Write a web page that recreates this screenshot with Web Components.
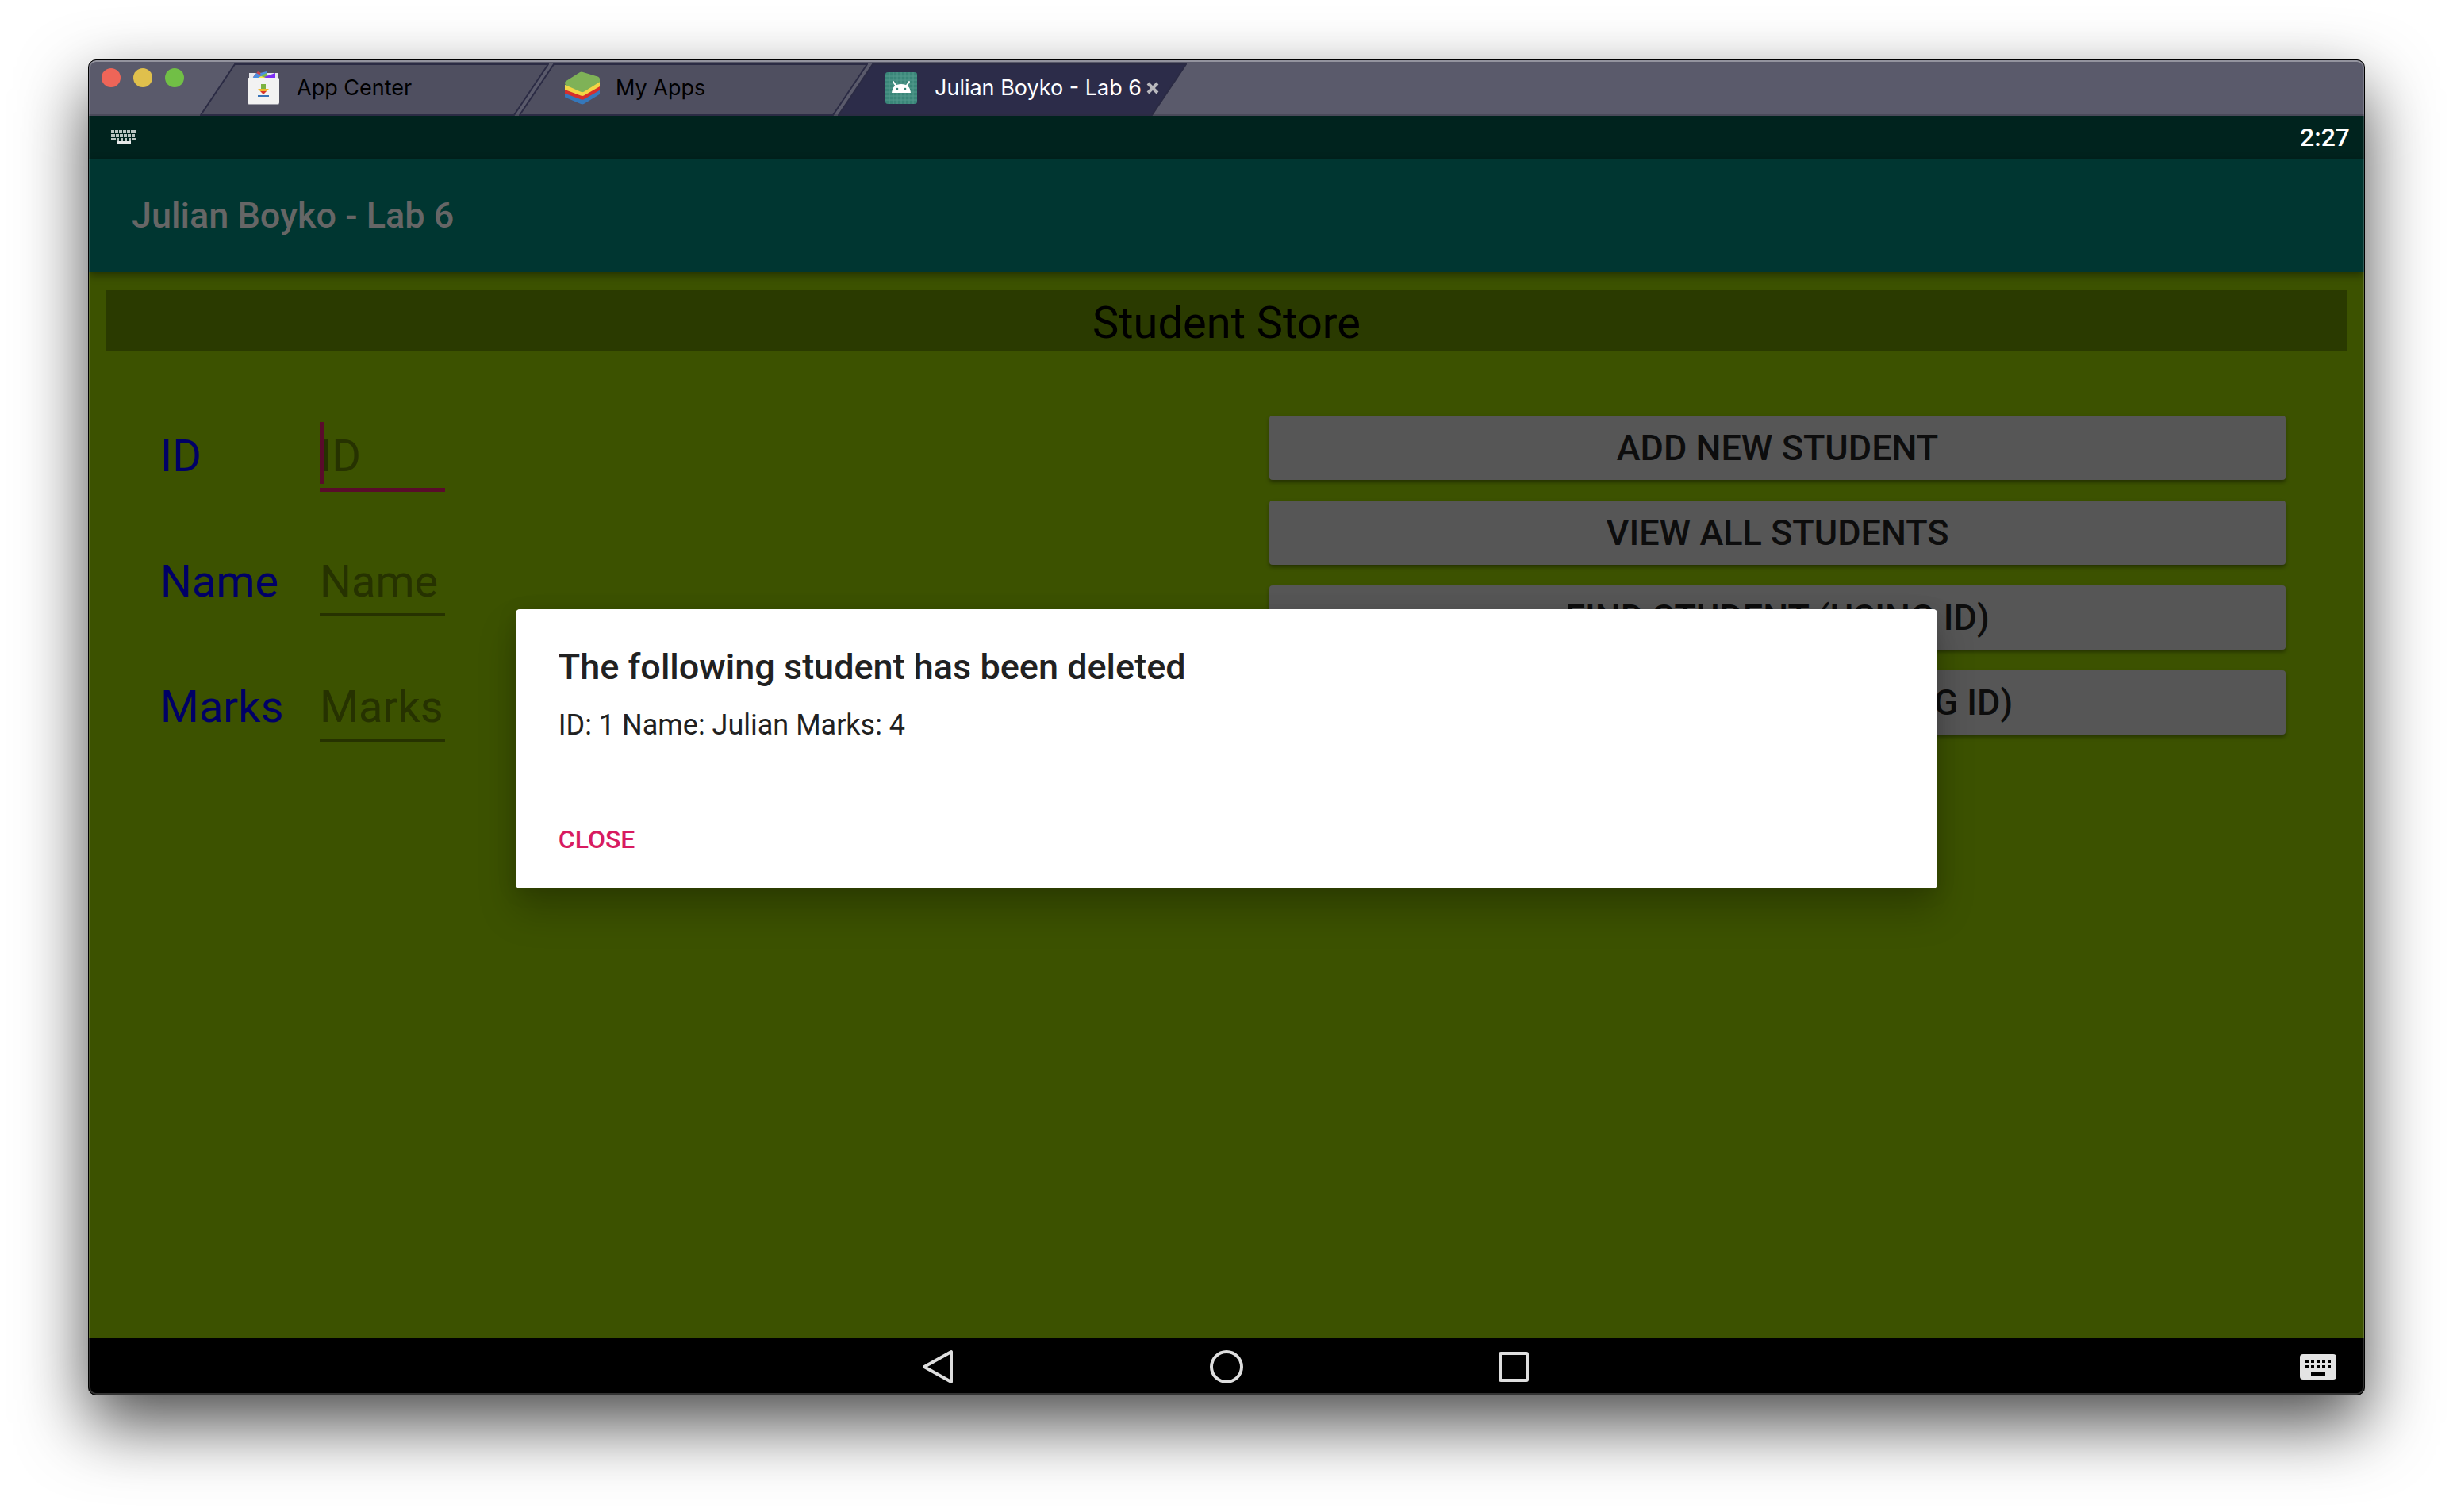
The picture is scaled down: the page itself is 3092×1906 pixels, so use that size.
<!DOCTYPE html>
<html lang="en">
<head>
<meta charset="utf-8">
<title>Julian Boyko - Lab 6</title>
<style>
  body { margin: 0; background: #fff; font-family: Roboto, "Noto Sans", sans-serif; }
</style>
</head>
<body>
<emulator-window>
  <window-tab slot="tabs" label="App Center">
    <svg slot="icon" width="42" height="44" viewBox="0 0 42 44" aria-hidden="true">
      <rect x="3" y="3" width="36" height="12" fill="#e8e8ec"/>
      <path d="M8 8 14 1l7 3-3 7z" fill="#c8434b"/>
      <path d="M7 10 12 3l7 4 2 5z" fill="#4c8fe0"/>
      <path d="M17 3 25 1l2 9-8 2z" fill="#4c8fe0"/>
      <path d="M19 6 25 3l3 7-8 2z" fill="#7cba4f"/>
      <path d="M22 8 36 3v9H24z" fill="#7c2cf5"/>
      <path d="M11 11l7-4 12 4v2H11z" fill="#fbe64b"/>
      <rect x="1" y="9" width="40" height="34" rx="2" fill="#9a9aa4"/>
      <rect x="1" y="9" width="40" height="33" rx="2" fill="#f2f2f2"/>
      <path d="M18 17h6v6h-6z" fill="#7cb342"/>
      <path d="M14 23h14l-3 3H17z" fill="#f0b92c"/>
      <path d="M17 26h8l-4 4z" fill="#d8352c"/>
      <path d="M14 31h14v2H14z" fill="#3874b8"/>
    </svg>
  </window-tab>
  <window-tab slot="tabs" label="My Apps">
    <svg slot="icon" width="46" height="44" viewBox="0 0 46 44" aria-hidden="true">
      <path d="M0 30 L23 16 46 24v6L25 43q-2 1-4 0L0 34z" fill="#3578bb"/>
      <path d="M0 24 L23 12 46 20v5L25 37q-2 1-4 0L0 29z" fill="#d62f2c"/>
      <path d="M0 18 L23 8 46 14v6L25 32q-2 1-4 0L0 24z" fill="#f3d645"/>
      <path d="M1 13 20 1q2-1 4 0l20 6q2 1 2 3v4L25 27q-2 1-4 0L1 18q-2-3 0-5z" fill="#7fb257"/>
    </svg>
  </window-tab>
  <window-tab slot="tabs" label="Julian Boyko - Lab 6" active>
    <svg slot="icon" width="40" height="40" viewBox="0 0 40 40" aria-hidden="true">
      <rect width="40" height="40" rx="3" fill="#3a8679"/>
      <path d="M5 0v40M10 0v40M15 0v40M20 0v40M25 0v40M30 0v40M35 0v40M0 5h40M0 10h40M0 15h40M0 20h40M0 25h40M0 30h40M0 35h40" stroke="#53998d" stroke-width="1"/>
      <path d="M10 12l4 6M30 12l-4 6" stroke="#fff" stroke-width="2" stroke-linecap="round"/>
      <path d="M8 26q1-11 12-11t12 11z" fill="#fff"/>
      <circle cx="15" cy="21" r="1.300" fill="#3a8679"/><circle cx="25" cy="21" r="1.300" fill="#3a8679"/>
    </svg>
  </window-tab>

  <status-bar time="2:27"></status-bar>
  <app-screen>
    <app-bar slot="bar">Julian Boyko - Lab 6</app-bar>
    <page-banner slot="banner">Student Store</page-banner>
    <text-field slot="fields" label="ID" focused></text-field>
    <text-field slot="fields" label="Name"></text-field>
    <text-field slot="fields" label="Marks"></text-field>
    <action-button slot="actions">ADD NEW STUDENT</action-button>
    <action-button slot="actions">VIEW ALL STUDENTS</action-button>
    <action-button slot="actions">FIND STUDENT (USING ID)</action-button>
    <action-button slot="actions">DELETE STUDENT (USING ID)</action-button>
    <alert-dialog slot="dialog" heading="The following student has been deleted" action="CLOSE">ID: 1 Name: Julian Marks: 4</alert-dialog>
  </app-screen>
  <nav-bar></nav-bar>
</emulator-window>

<script>
  const define = (name, css, render) => customElements.define(name, class extends HTMLElement {
    constructor() {
      super();
      this.attachShadow({ mode: 'open' });
    }
    connectedCallback() {
      this.shadowRoot.innerHTML = `<style>*{box-sizing:border-box}${css}</style>${render(this)}`;
    }
  });

  define('emulator-window', `
    :host { display: flex; box-sizing: border-box; min-height: 100vh; padding: 75px 111px 147px; }
    .frame { position: relative; flex: 1; display: flex; flex-direction: column; border: 1px solid #000;
      border-radius: 10px; overflow: hidden; background: #000; box-shadow: 0 36px 86px rgba(0,0,0,.7); }
    .frame::after { content: ""; position: absolute; inset: 0; border: 2px solid rgba(255,255,255,.2);
      border-top-color: rgba(255,255,255,.35); border-radius: 9px; pointer-events: none; }
    header { display: flex; height: 70px; background: #5a5a6b; box-shadow: inset 0 -2px #4a4a5a; }
    .lights { display: flex; gap: 16px; padding: 10px 20px 0 16px; width: 140px; }
    .lights button { width: 24px; height: 24px; padding: 0; border: 0; border-radius: 50%; }
    .close { background: #ee6558; } .min { background: #e0c04c; } .max { background: #71bf46; }
    nav { display: flex; padding-top: 4px; }
  `, () => `
    <div class="frame">
      <header>
        <div class="lights">
          <button class="close" aria-label="Close window"></button>
          <button class="min" aria-label="Minimize"></button>
          <button class="max" aria-label="Zoom"></button>
        </div>
        <nav><slot name="tabs"></slot></nav>
      </header>
      <slot></slot>
    </div>`);

  define('window-tab', `
    :host { display: grid; width: 440px; height: 66px; margin-right: -38px; color: #000;
      font-family: Inter, "Liberation Sans", sans-serif; font-size: 27px; line-height: 32px; }
    :host([active]) { color: #fff; }
    .shape, .row { grid-area: 1 / 1; }
    .shape { width: 100%; height: 100%; }
    polygon { fill: #4f4f60; stroke: #2b2b44; stroke-width: 2; }
    :host([active]) polygon { fill: #2c2c49; }
    .row { display: flex; align-items: center; padding: 0 0 4px 58px; }
    .icon { display: flex; width: 44px; justify-content: center; margin-right: 20px; }
    a { color: inherit; text-decoration: none; white-space: nowrap; }
    .x { display: flex; padding: 0; margin-left: 6px; border: 0; background: none; }
  `, el => `
    <svg class="shape" viewBox="0 0 440 66" preserveAspectRatio="none" aria-hidden="true"><polygon points="1,65 44,1 439,1 396,65"/></svg>
    <div class="row">
      <span class="icon"><slot name="icon"></slot></span>
      <a href="#">${el.getAttribute('label')}</a>
      ${el.hasAttribute('active') ? '<button class="x" aria-label="Close tab"><svg width="16" height="16" viewBox="0 0 16 16"><path d="M2 2l12 12M14 2L2 14" stroke="#b9b9bd" stroke-width="4"/></svg></button>' : ''}
    </div>`);

  const keys = (y, n, w, x0, step) => Array.from({ length: n }, (_, i) =>
    `<rect x="${x0 + i * step}" y="${y}" width="${w}" height="4"/>`).join('');

  define('status-bar', `
    :host { display: flex; box-sizing: border-box; height: 54px; align-items: center; justify-content: space-between; padding: 0 18px 0 28px;
      background: #00231e; color: #fff; font-size: 32px; font-weight: 500; line-height: 38px; }
  `, el => `
    <svg width="32" height="20" viewBox="0 0 32 20" fill="#b9c4c1" aria-label="Keyboard">
      ${keys(1, 6, 4, 0, 5)}<rect x="27" y="1" width="5" height="4"/>
      <rect y="6" width="5" height="4"/>${keys(6, 5, 4, 6, 5)}
      <rect y="11" width="6" height="3"/>${keys(11, 4, 3, 7, 5)}<rect x="26" y="11" width="6" height="3"/>
      <rect x="7" y="15" width="18" height="4" fill="#e6eae9"/>
    </svg>
    <time>${el.getAttribute('time')}</time>`);

  define('app-screen', `
    :host { position: relative; flex: 1; display: flex; flex-direction: column; background: #3c5200; }
    .form { display: grid; grid-template-columns: 1fr 1fr; }
    .fields { padding: 99px 0 0 90px; }
    .actions { display: flex; flex-direction: column; gap: 26px; padding: 81px 99px 0 54px; }
  `, () => `
    <slot name="bar"></slot>
    <slot name="banner"></slot>
    <div class="form">
      <div class="fields"><slot name="fields"></slot></div>
      <div class="actions"><slot name="actions"></slot></div>
    </div>
    <slot name="dialog"></slot>`);

  define('app-bar', `
    :host { display: flex; height: 143px; align-items: center; padding-left: 54px; background: #003631; box-shadow: 0 4px 10px rgba(0,0,0,.4); }
    h1 { margin: 0; color: #666; font-size: 45px; font-weight: 500; line-height: 54px; }
  `, () => `<h1><slot></slot></h1>`);

  define('page-banner', `
    :host { display: block; margin: 22px 22px 0; background: #2a3a00; }
    h2 { margin: 0; padding: 9px 0 3px; color: #000; text-align: center; font-size: 56px; font-weight: 400; line-height: 66px; }
  `, () => `<h2><slot></slot></h2>`);

  define('text-field', `
    :host { display: flex; align-items: flex-start; height: 158px; font-size: 56px; line-height: 66px; }
    label { width: 201px; color: #000066; }
    .box { position: relative; display: flex; }
    input { width: 158px; padding: 0 0 7px; border: 0; border-bottom: 4px solid #263200; border-radius: 0; background: none;
      font: inherit; height: 77px; outline: 0; color: #000; }
    input::placeholder { color: #263200; opacity: 1; }
    :host([focused]) input { height: 78px; border-bottom: 5px solid #5a0b2b; }
    :host([focused]) .box::after { content: ""; position: absolute; left: 0; top: -10px; width: 5px; height: 78px; background: #5a0b2b; }
  `, el => {
    const label = el.getAttribute('label');
    return `<label for="f">${label}</label><div class="box"><input id="f" type="text" placeholder="${label}"></div>`;
  });

  define('action-button', `
    :host { display: flex; }
    button { flex: 1; height: 81px; padding: 0; border: 0; border-radius: 4px; background: #565656; color: #0d0d0d;
      font: 500 45px/54px Roboto, sans-serif; box-shadow: 0 3px 5px rgba(0,0,0,.4); }
  `, () => `<button type="button"><slot></slot></button>`);

  define('alert-dialog', `
    :host { position: absolute; inset: 0; display: flex; align-items: center; justify-content: center; }
    dialog { position: static; width: 62.5%; margin: 0; padding: 46px 54px 43px; border: 0; border-radius: 5px;
      background: #fff; color: #212121; box-shadow: 0 28px 48px rgba(0,0,0,.22), 0 4px 24px rgba(0,0,0,.12); }
    h3 { margin: 0 0 26px; font-size: 45px; font-weight: 500; line-height: 53px; }
    p { margin: 0 0 104px; font-size: 36px; line-height: 42px; }
    button { display: block; padding: 0; border: 0; background: none; color: #d81b60; font: 500 32px/38px Roboto, sans-serif; }
  `, el => `
    <dialog open aria-labelledby="t">
      <h3 id="t">${el.getAttribute('heading')}</h3>
      <p><slot></slot></p>
      <button type="button">${el.getAttribute('action')}</button>
    </dialog>`);

  define('nav-bar', `
    :host { display: grid; grid-template-columns: 1fr auto 1fr; align-items: center; height: 71px; padding: 0 35px; background: #000; }
    .keys { grid-column: 2; display: flex; gap: 319px; }
    .ime { justify-self: end; }
    button { display: flex; padding: 0; border: 0; background: none; }
  `, () => `
    <div class="keys">
      <button aria-label="Back"><svg width="44" height="44" viewBox="0 0 44 44"><path d="M38 3v38L4 22z" fill="none" stroke="#dedede" stroke-width="4" stroke-linejoin="round"/></svg></button>
      <button aria-label="Home"><svg width="44" height="44" viewBox="0 0 44 44"><circle cx="22" cy="22" r="19" fill="none" stroke="#dedede" stroke-width="4"/></svg></button>
      <button aria-label="Overview"><svg width="44" height="44" viewBox="0 0 44 44"><rect x="4" y="5" width="34" height="34" rx="1" fill="none" stroke="#dedede" stroke-width="4"/></svg></button>
    </div>
    <button class="ime" aria-label="Switch keyboard"><svg width="46" height="34" viewBox="0 0 46 34"><rect y="1" width="46" height="32" rx="4" fill="#e4e4e4"/>
      ${[0, 1, 2, 3, 4].map(i => `<rect x="${7 + i * 7}" y="8" width="4" height="4"/><rect x="${7 + i * 7}" y="15" width="4" height="4"/>`).join('')}
      <rect x="14" y="23" width="18" height="5"/></svg></button>`);
</script>
</body>
</html>
